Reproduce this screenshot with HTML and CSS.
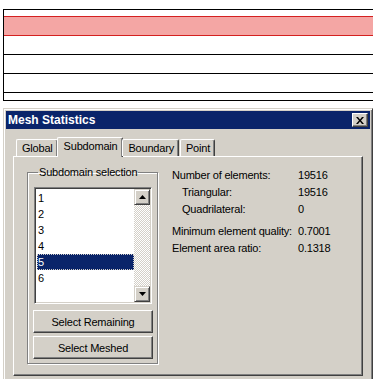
FILE: index.html
```html
<!DOCTYPE html>
<html lang="en">

<head>
    <meta charset="UTF-8">
    <title>Mesh Statistics</title>
    <link rel="stylesheet" href="styles.css">
</head>

<body>
    <div class="sheet">
        <div class="row row-first"></div>
        <div class="row row-hit"></div>
        <div class="row"></div>
        <div class="row"></div>
        <div class="row"></div>
        <div class="row row-last"></div>
    </div>

    <div class="dialog">
        <div class="titlebar">
            <span class="title">Mesh Statistics</span>
            <span class="close-btn">
                <svg width="8" height="7" viewBox="0 0 8 7"><path d="M0 0h2l2 2.5 2-2.5h2l-3 3.5 3 3.5h-2l-2-2.5-2 2.5h-2l3-3.5z" fill="#000"/></svg>
            </span>
        </div>

        <div class="dialog-body">
            <div class="tabs">
                <div class="tab">Global</div>
                <div class="tab active">Subdomain</div>
                <div class="tab">Boundary</div>
                <div class="tab">Point</div>
            </div>

            <div class="panel">
                <fieldset class="group">
                    <legend>Subdomain selection</legend>
                    <div class="listbox">
                        <div class="items">
                            <div class="item">1</div>
                            <div class="item">2</div>
                            <div class="item">3</div>
                            <div class="item">4</div>
                            <div class="item selected">5</div>
                            <div class="item">6</div>
                        </div>
                        <div class="scrollbar">
                            <div class="arrow">
                                <svg width="7" height="4" viewBox="0 0 7 4"><path d="M3.5 0L7 4H0z" fill="#000"/></svg>
                            </div>
                            <div class="track"></div>
                            <div class="arrow">
                                <svg width="7" height="4" viewBox="0 0 7 4"><path d="M0 0h7L3.5 4z" fill="#000"/></svg>
                            </div>
                        </div>
                    </div>
                    <button class="btn">Select Remaining</button>
                    <button class="btn">Select Meshed</button>
                </fieldset>

                <div class="stats">
                    <span>Number of elements:</span><span>19516</span>
                    <span class="sub">Triangular:</span><span>19516</span>
                    <span class="sub">Quadrilateral:</span><span>0</span>
                    <span class="gap"></span><span class="gap"></span>
                    <span>Minimum element quality:</span><span>0.7001</span>
                    <span>Element area ratio:</span><span>0.1318</span>
                </div>
            </div>
        </div>
    </div>
</body>

</html>
```

FILE: styles.css
```css
body {
    margin: 0;
    background: #fff;
    font-family: "Liberation Sans", Arial, sans-serif;
    font-size: 11px;
    letter-spacing: -0.2px;
    color: #000;
    overflow: hidden;
}

/* spreadsheet rows behind the dialog */
.sheet {
    margin: 9px 0 0 3px;
    border: 1px solid #000;
    border-right: none;
}

.row {
    height: 18px;
    border-bottom: 1px solid #000;
}

.row-first {
    height: 6px;
    border-bottom: none;
}

.row-hit {
    background: #f4a6a4;
    border-top: 1px solid #d42020;
    border-bottom: 1px solid #d42020;
}

.row-last {
    height: 7px;
    border-bottom: none;
}

/* dialog window */
.dialog {
    margin: 7px 0 0 3px;
    width: 370px;
    height: 280px;
    box-sizing: border-box;
    background: #d4d0c8;
    border: 1px solid;
    border-color: #d4d0c8 #404040 #404040 #d4d0c8;
    box-shadow: inset 1px 1px #fff, inset -1px -1px #808080;
    padding: 2px;
}

.titlebar {
    height: 18px;
    background: #0a246a;
    display: flex;
    align-items: center;
    justify-content: space-between;
    padding: 0 2px 0 2px;
}

.title {
    color: #fff;
    font-weight: bold;
    font-size: 12px;
    letter-spacing: 0;
}

.close-btn {
    width: 16px;
    height: 14px;
    box-sizing: border-box;
    background: #d4d0c8;
    border: 1px solid;
    border-color: #fff #404040 #404040 #fff;
    box-shadow: inset -1px -1px #808080;
    display: flex;
    align-items: center;
    justify-content: center;
}

.dialog-body {
    padding: 8px 7px 0 7px;
}

.tabs {
    display: flex;
    align-items: flex-end;
    padding-left: 3px;
    height: 19px;
    position: relative;
    z-index: 1;
}

.tab {
    height: 17px;
    line-height: 16px;
    box-sizing: border-box;
    padding: 0 4px 0 5px;
    margin-right: 1px;
    border: 1px solid #fff;
    border-bottom: none;
    border-right-color: #404040;
    box-shadow: inset -1px 0 #808080;
    border-radius: 2px 2px 0 0;
    background: #d4d0c8;
}

.tab.active {
    height: 20px;
    margin: 0 -1px -1px -2px;
    padding: 0 5px 0 6px;
    line-height: 17px;
}

.panel {
    height: 220px;
    box-sizing: border-box;
    border: 1px solid;
    border-color: #fff #404040 #404040 #fff;
    box-shadow: inset -1px -1px #808080;
    display: flex;
    align-items: flex-start;
    padding: 9px 0 0 13px;
}

.group {
    margin: 0;
    width: 131px;
    box-sizing: border-box;
    padding: 0 5px 4px 6px;
    border: 1px solid #808080;
    box-shadow: inset 1px 1px #fff, 1px 1px #fff;
    display: flex;
    flex-direction: column;
    gap: 3px;
}

.group legend {
    padding: 0 1px;
    margin-left: 4px;
    line-height: 13px;
}

.listbox {
    margin-top: 8px;
    height: 117px;
    box-sizing: border-box;
    background: #fff;
    border: 1px solid;
    border-color: #808080 #fff #fff #808080;
    box-shadow: inset 1px 1px #404040, inset -1px -1px #d4d0c8;
    padding: 2px 1px 1px 2px;
    display: flex;
    margin-bottom: 3px;
    flex-shrink: 0;
}

.items {
    flex: 1;
}

.item {
    height: 16px;
    line-height: 16px;
    padding-left: 1px;
}

.item.selected {
    background: #0a246a;
    color: #fff;
    outline: 1px dotted #d4d0c8;
    outline-offset: -1px;
}

.scrollbar {
    width: 16px;
    display: flex;
    flex-direction: column;
    margin-top: -1px;
}

.arrow {
    height: 16px;
    box-sizing: border-box;
    background: #d4d0c8;
    border: 1px solid;
    border-color: #d4d0c8 #404040 #404040 #d4d0c8;
    box-shadow: inset 1px 1px #fff, inset -1px -1px #808080;
    display: flex;
    align-items: center;
    justify-content: center;
}

.track {
    flex: 1;
    background: repeating-conic-gradient(#fff 0 25%, #d4d0c8 0 50%) 0 0 / 2px 2px;
}

.btn {
    margin: 0 -1px;
    height: 23px;
    font-family: inherit;
    font-size: 11px;
    letter-spacing: -0.2px;
    color: #000;
    background: #d4d0c8;
    border: 1px solid;
    border-color: #fff #404040 #404040 #fff;
    box-shadow: inset -1px -1px #808080;
    padding: 0;
    flex-shrink: 0;
}

.stats {
    margin-left: 14px;
    margin-top: 1px;
    display: grid;
    grid-template-columns: 126px auto;
    line-height: 17px;
}

.stats .sub {
    padding-left: 10px;
}

.stats .gap {
    height: 5px;
}
```
